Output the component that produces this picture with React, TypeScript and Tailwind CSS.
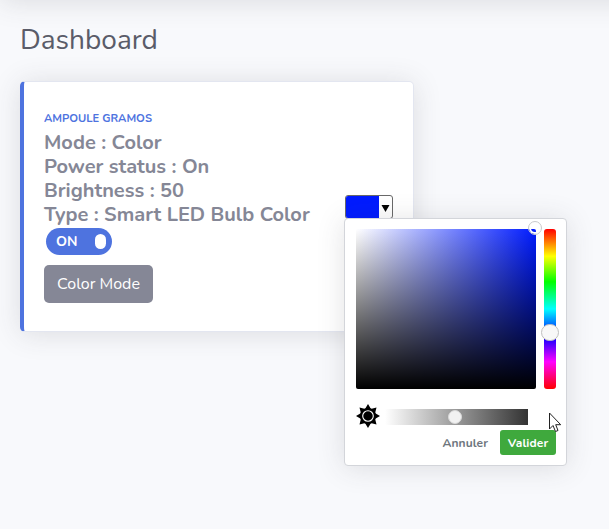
import React from 'react';

function Sun() {
  const rays = Array.from({ length: 8 }, (_, i) => i * 45);
  return (
    <svg className="block size-6 shrink-0" viewBox="0 0 24 24">
      {rays.map((angle) => (
        <path key={angle} d="M12 0 L15.6 6 L8.4 6 Z" transform={`rotate(${angle} 12 12)`} />
      ))}
      <circle cx="12" cy="12" r="8" />
      <circle cx="12" cy="12" r="5.3" fill="none" stroke="#fff" strokeWidth="1.1" />
    </svg>
  );
}

function ColorPicker() {
  return (
    <div className="absolute left-[344px] top-[218px] h-[248px] w-[223px] rounded-[4px] border border-[#d3d5da] bg-white pl-[11px] pr-[10px] pt-[10px] shadow-[0_2px_28px_rgba(58,59,69,0.15)]">
      <div className="flex gap-2">
        <div className="relative h-40 w-[180px]">
          <div className="h-40 w-[180px] overflow-hidden rounded-[2px] bg-[linear-gradient(to_top,#000,transparent),linear-gradient(to_right,#fff,#001bff)]" />
          <div className="absolute -top-[8px] left-[172px] size-[14px] rounded-full border border-[#c8c9cc] shadow-[inset_0_0_0_2px_#fff]" />
        </div>
        <div className="relative h-40 w-3 rounded-[3px] bg-[linear-gradient(#f00_0%,#ff0_17%,#0f0_33%,#0ff_50%,#00f_67%,#f0f_83%,#f00_100%)]">
          <div className="absolute -left-[3px] top-[95px] h-[17px] w-[18px] rounded-full border border-[#bfbfbf] bg-[#f8f8f8]" />
        </div>
      </div>
      <div className="mt-[15px] flex h-6 items-center gap-[5px]">
        <Sun />
        <div className="relative mt-[2px] h-4 w-[143px] bg-[linear-gradient(to_right,#fff,#333)]">
          <div className="absolute left-[63px] top-[1px] size-[14px] rounded-full border border-[#d8d8d8] bg-[#f2f2f2]" />
        </div>
      </div>
      <div className="mt-[2px] flex h-[25px] items-center justify-end gap-[12px] text-[12px] font-bold">
        <span className="whitespace-nowrap tracking-[0.1px] text-[#6e767d]">Annuler</span>
        <button className="flex h-[25px] w-14 items-center justify-center rounded-[3px] bg-[#3fa93d] tracking-[0.1px] text-white">Valider</button>
      </div>
    </div>
  );
}

function Pointer() {
  return (
    <svg className="absolute left-[549px] top-[412px] h-[21px] w-[13px]" viewBox="0 0 13 21">
      <path d="M.5 1 V17 L4 13.5 L6.5 19.5 L9 18.5 L6.7 12.7 H11.7 Z" fill="#fff" stroke="#222" />
    </svg>
  );
}

export default function App() {
  return (
    <div className="relative h-[529px] w-[609px] overflow-hidden bg-[#f8f9fc] font-['Nunito','Lato',sans-serif]">
      <div className="-mr-10 -mt-[70px] h-[70px] bg-white shadow-[0_2px_28px_rgba(58,59,69,0.15)]" />
      <main className="pl-5 pt-[23px]">
        <h1 className="h-[34px] whitespace-nowrap text-[28px] font-normal leading-[34px] text-[#5a5c69]">Dashboard</h1>
        <section className="mt-[24px] flex h-[251px] w-[394px] rounded-[5px] border border-l-4 border-[#e3e6f0] border-l-[#4e73df] bg-white pl-5 pt-[28px] shadow-[0_2px_28px_rgba(58,59,69,0.15)]">
          <div className="w-[301px]">
            <div className="mb-1 h-[17px] whitespace-nowrap text-[11.2px] font-bold leading-[17px] text-[#4e73df]">AMPOULE GRAMOS</div>
            <div className="whitespace-nowrap text-[20px] font-bold leading-6 text-[#858796]">
              <p>Mode : Color</p>
              <p>Power status : On</p>
              <p>Brightness : 50</p>
              <p>Type : Smart LED Bulb Color</p>
            </div>
            <div className="ml-[2px] mt-[1px] flex h-[27px] w-[66px] items-center justify-between rounded-full bg-[#4e73df] pl-[10px] pr-[6px]">
              <span className="mt-px text-[14px] font-bold leading-none text-white">ON</span>
              <span className="h-[15px] w-[11px] rounded-[5.5px] bg-white" />
            </div>
            <button className="mt-[10px] flex h-[38px] w-[109px] items-center justify-center whitespace-nowrap rounded-[5px] bg-[#858796] text-[16px] text-white">Color Mode</button>
          </div>
          <div className="mt-[85px] flex h-6 w-12 overflow-hidden rounded-[3px] border border-[#696969] bg-white">
            <span className="h-full w-[33px] bg-[#001bff]" />
            <span className="flex flex-1 items-center justify-center">
              <svg className="mt-[3px] block h-[7px] w-[9px]" viewBox="0 0 9 7"><path d="M.5 0H8.5L4.5 7Z" /></svg>
            </span>
          </div>
        </section>
      </main>
      <ColorPicker />
      <Pointer />
    </div>
  );
}
